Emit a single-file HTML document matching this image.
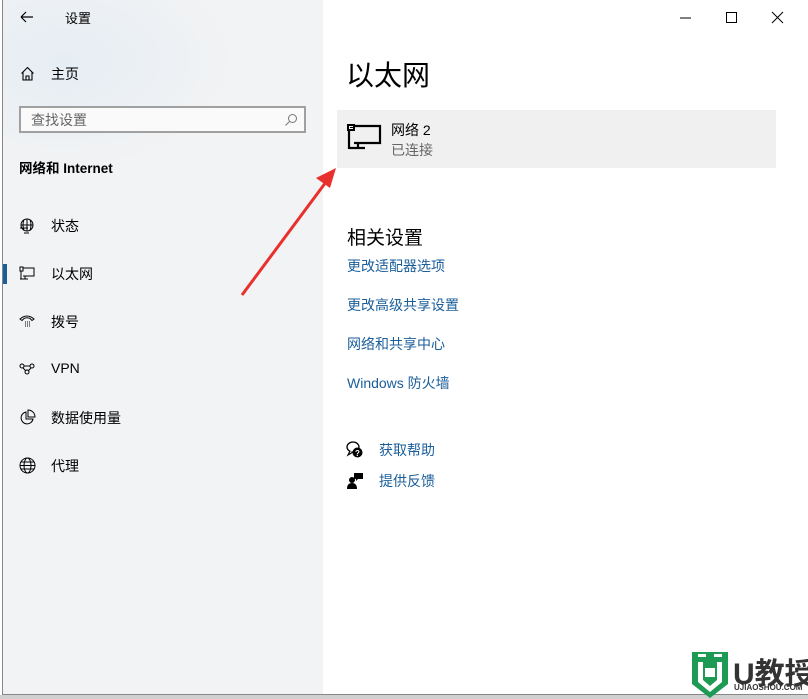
<!DOCTYPE html>
<html><head><meta charset="utf-8"><style>
body{margin:0;width:808px;height:699px;overflow:hidden;background:#fff;font-family:"Liberation Sans","Noto Sans CJK SC",sans-serif;position:relative;color:#000}
.win{position:absolute;left:2px;top:0;width:806px;height:695px;border-left:1px solid #888;border-bottom:1px solid #888;box-sizing:border-box;background:#fff}
.left{position:absolute;left:3px;top:0;width:320px;height:694px;background:radial-gradient(ellipse 220px 140px at 60px 60px,#e6edf4,#f2f3f4 80%) ,#f2f2f2}
.t{position:absolute;font-size:14px;white-space:nowrap}
.ic{position:absolute}
.link{color:#1a5e9a;font-size:14px;position:absolute;white-space:nowrap}
</style></head><body>
<div class="win"></div>
<div class="left"></div>
<div style="position:absolute;left:0;top:695px;width:808px;height:4px;background:#d0d0d0"></div>
<!-- left pane -->
<svg class="ic" style="left:20px;top:10px" width="14" height="14"><path d="M1 7H13M1 7L6 2M1 7L6 12" stroke="#000" fill="none" stroke-width="1.2"/></svg>
<div class="t" style="left:65px;top:8px;font-size:13px">设置</div>
<svg class="ic" style="left:20px;top:66px" width="15" height="15"><path d="M1.5 7.5L7.5 1.5L13.5 7.5M3 6V14H12V6M6 14V10H9V14" stroke="#000" fill="none" stroke-width="1.1"/></svg>
<div class="t" style="left:51px;top:64px">主页</div>
<div style="position:absolute;left:19px;top:106px;width:287px;height:27px;border:2px solid #a0a0a0;box-sizing:border-box;background:#fafafa"></div>
<div class="t" style="left:31px;top:110px;color:#666">查找设置</div>
<svg class="ic" style="left:284px;top:113px" width="14" height="14"><circle cx="8.5" cy="5.5" r="4" stroke="#777" fill="none"/><path d="M5.5 8.5L1.5 12.5" stroke="#777"/></svg>
<div class="t" style="left:19px;top:157px;font-weight:bold;font-size:13.5px">网络和 Internet</div>

<svg class="ic" style="left:19px;top:218px" width="16" height="16"><circle cx="8" cy="7" r="6" stroke="#000" fill="none"/><path d="M2 7H14M8 1V13M5 1.5Q3 7 5 12.5M11 1.5Q13 7 11 12.5M1 10H9M5 15H10" stroke="#000" fill="none"/></svg>
<div class="t" style="left:51px;top:216px">状态</div>
<div style="position:absolute;left:3px;top:264px;width:4px;height:20px;background:#1a5e9a"></div>
<svg class="ic" style="left:19px;top:266px" width="16" height="14"><path d="M1 1H4V5H1ZM4 2H15V10H4M2 5V13M1 13H9M6 10V13" stroke="#000" fill="none"/></svg>
<div class="t" style="left:51px;top:264px">以太网</div>
<svg class="ic" style="left:19px;top:313px" width="16" height="16"><path d="M1 6Q8 0 15 6L13 7.5L11 5.5Q8 4 5 5.5L3 7.5Z" stroke="#000" fill="none"/><path d="M6 9h1M8 9h1M10 9h1M6 11h1M8 11h1M10 11h1M6 13h1M8 13h1M10 13h1" stroke="#000"/></svg>
<div class="t" style="left:51px;top:312px">拨号</div>
<svg class="ic" style="left:19px;top:363px" width="16" height="12"><circle cx="3" cy="3" r="2" stroke="#000" fill="none"/><circle cx="13" cy="3" r="2" stroke="#000" fill="none"/><circle cx="8" cy="9" r="2" stroke="#000" fill="none"/><path d="M5 3H11M4 5L7 8M12 5L9 8" stroke="#000"/></svg>
<div class="t" style="left:51px;top:360px">VPN</div>
<svg class="ic" style="left:19px;top:409px" width="17" height="17"><path d="M7 3A6 6 0 1 0 14 10H7Z" stroke="#000" fill="none"/><path d="M9 1V8H16A7 7 0 0 0 9 1Z" stroke="#000" fill="none"/></svg>
<div class="t" style="left:51px;top:408px">数据使用量</div>
<svg class="ic" style="left:19px;top:457px" width="17" height="17"><circle cx="8.5" cy="8.5" r="7.5" stroke="#000" fill="none"/><ellipse cx="8.5" cy="8.5" rx="3.5" ry="7.5" stroke="#000" fill="none"/><path d="M1 8.5H16M2 5H15M2 12H15" stroke="#000"/></svg>
<div class="t" style="left:51px;top:456px">代理</div>

<!-- title bar controls -->
<svg class="ic" style="left:680px;top:11px" width="110" height="14"><path d="M0 7H11" stroke="#000"/><rect x="46.5" y="1.5" width="10" height="10" stroke="#000" fill="none"/><path d="M92 1L103 12M103 1L92 12" stroke="#000"/></svg>

<!-- right pane -->
<div class="t" style="left:346px;top:54px;font-size:28px">以太网</div>
<div style="position:absolute;left:337px;top:110px;width:439px;height:58px;background:#f0f0f0"></div>
<svg class="ic" style="left:346px;top:124px" width="36" height="27"><path d="M2 1H8V6H2Z" stroke="#000" stroke-width="2" fill="none"/><path d="M8 2H34V19H8M3 6V25M3 24H19M12 19V24" stroke="#000" stroke-width="2.2" fill="none"/><path d="M4 3h3v1h-3z" fill="#000"/></svg>
<div class="t" style="left:391px;top:120px">网络 2</div>
<div class="t" style="left:391px;top:140px;color:#666">已连接</div>

<div class="t" style="left:347px;top:223px;font-size:19px">相关设置</div>
<div class="link" style="left:347px;top:256px">更改适配器选项</div>
<div class="link" style="left:347px;top:295px">更改高级共享设置</div>
<div class="link" style="left:347px;top:334px">网络和共享中心</div>
<div class="link" style="left:347px;top:373px">Windows 防火墙</div>
<svg class="ic" style="left:346px;top:441px" width="18" height="18"><ellipse cx="7" cy="6" rx="6" ry="5" stroke="#000" fill="none" stroke-width="1.3"/><path d="M4 10L2 14L7 11" stroke="#000" fill="#fff" stroke-width="1.2"/><circle cx="11.5" cy="11.5" r="5" fill="#000"/><text x="9" y="15" font-size="8" font-weight="bold" fill="#fff" font-family="Liberation Sans">?</text></svg>
<div class="link" style="left:379px;top:440px">获取帮助</div>
<svg class="ic" style="left:346px;top:472px" width="18" height="18"><circle cx="6" cy="8" r="3" fill="#000"/><path d="M1 17Q1 11 6 11Q11 11 11 17Z" fill="#000"/><path d="M8 1H17V7H12L10 9V7H8Z" fill="#000"/></svg>
<div class="link" style="left:379px;top:471px">提供反馈</div>

<!-- red arrow -->
<svg class="ic" style="left:230px;top:160px" width="120" height="145"><path d="M12 135L96 22" stroke="#e8302c" stroke-width="3"/><path d="M106 8L86 18L100 28Z" fill="#e8302c"/></svg>

<!-- watermark -->
<svg class="ic" style="left:690px;top:650px" width="40" height="49"><path d="M2 2H38V34L20 48L2 34Z" fill="#1d9a53"/><rect x="8" y="4" width="8" height="3" fill="#fff"/><rect x="24" y="4" width="8" height="3" fill="#fff"/><path d="M8 12V32L20 42L32 32V12H27V30L20 36L13 30V12Z" fill="#fff"/><rect x="15" y="18" width="10" height="9" fill="#fff"/></svg>
<div class="t" style="left:733px;top:649px;font-size:30px;font-weight:bold;color:#333">U教授</div>
<div class="t" style="left:734px;top:683px;font-size:8px;font-weight:bold;color:#333">UJIAOSHOU.COM</div>
</body></html>
